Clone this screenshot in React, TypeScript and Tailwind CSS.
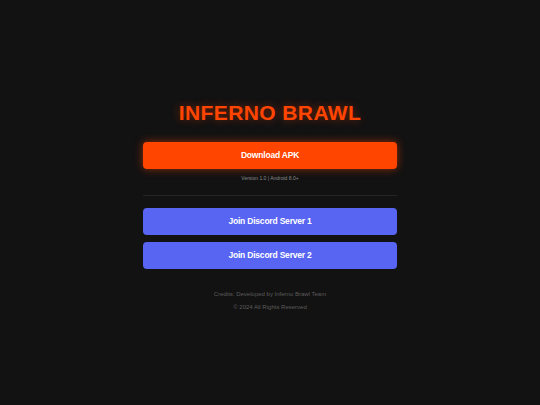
export default function App() {
  return (
    <div className="min-h-screen bg-[#121212] pt-[101px] font-['Liberation_Sans',Arial,sans-serif]">
      <div className="mx-auto flex w-[254px] flex-col items-stretch text-center">
        <h1 className="text-[21px] font-bold leading-[24px] tracking-[0.4px] text-[#ff4500] [text-shadow:0_0_8px_rgba(255,69,0,0.45)]">
          INFERNO BRAWL
        </h1>

        <button className="mt-[17px] h-[27px] rounded-[4px] bg-[#ff4500] text-[8.5px] font-bold tracking-[-0.2px] text-white shadow-[0_0_8px_rgba(255,69,0,0.55)]">
          Download APK
        </button>
        <p className="mt-[5px] text-[5px] leading-[8px] text-[#8a8a8a]">Version 1.0 | Android 8.0+</p>

        <div className="mt-[13px] h-px bg-[#242424]" />

        <button className="mt-[12px] h-[27px] rounded-[4px] bg-[#5865f2] text-[8.5px] font-bold tracking-[-0.2px] text-white">
          Join Discord Server 1
        </button>
        <button className="mt-[7px] h-[27px] rounded-[4px] bg-[#5865f2] text-[8.5px] font-bold tracking-[-0.2px] text-white">
          Join Discord Server 2
        </button>

        <p className="mt-[21px] text-[6px] leading-[8px] text-[#5c5c5c]">
          Credits: Developed by Inferno Brawl Team
        </p>
        <p className="mt-[5px] text-[6px] leading-[8px] text-[#5c5c5c]">© 2024 All Rights Reserved</p>
      </div>
    </div>
  );
}
